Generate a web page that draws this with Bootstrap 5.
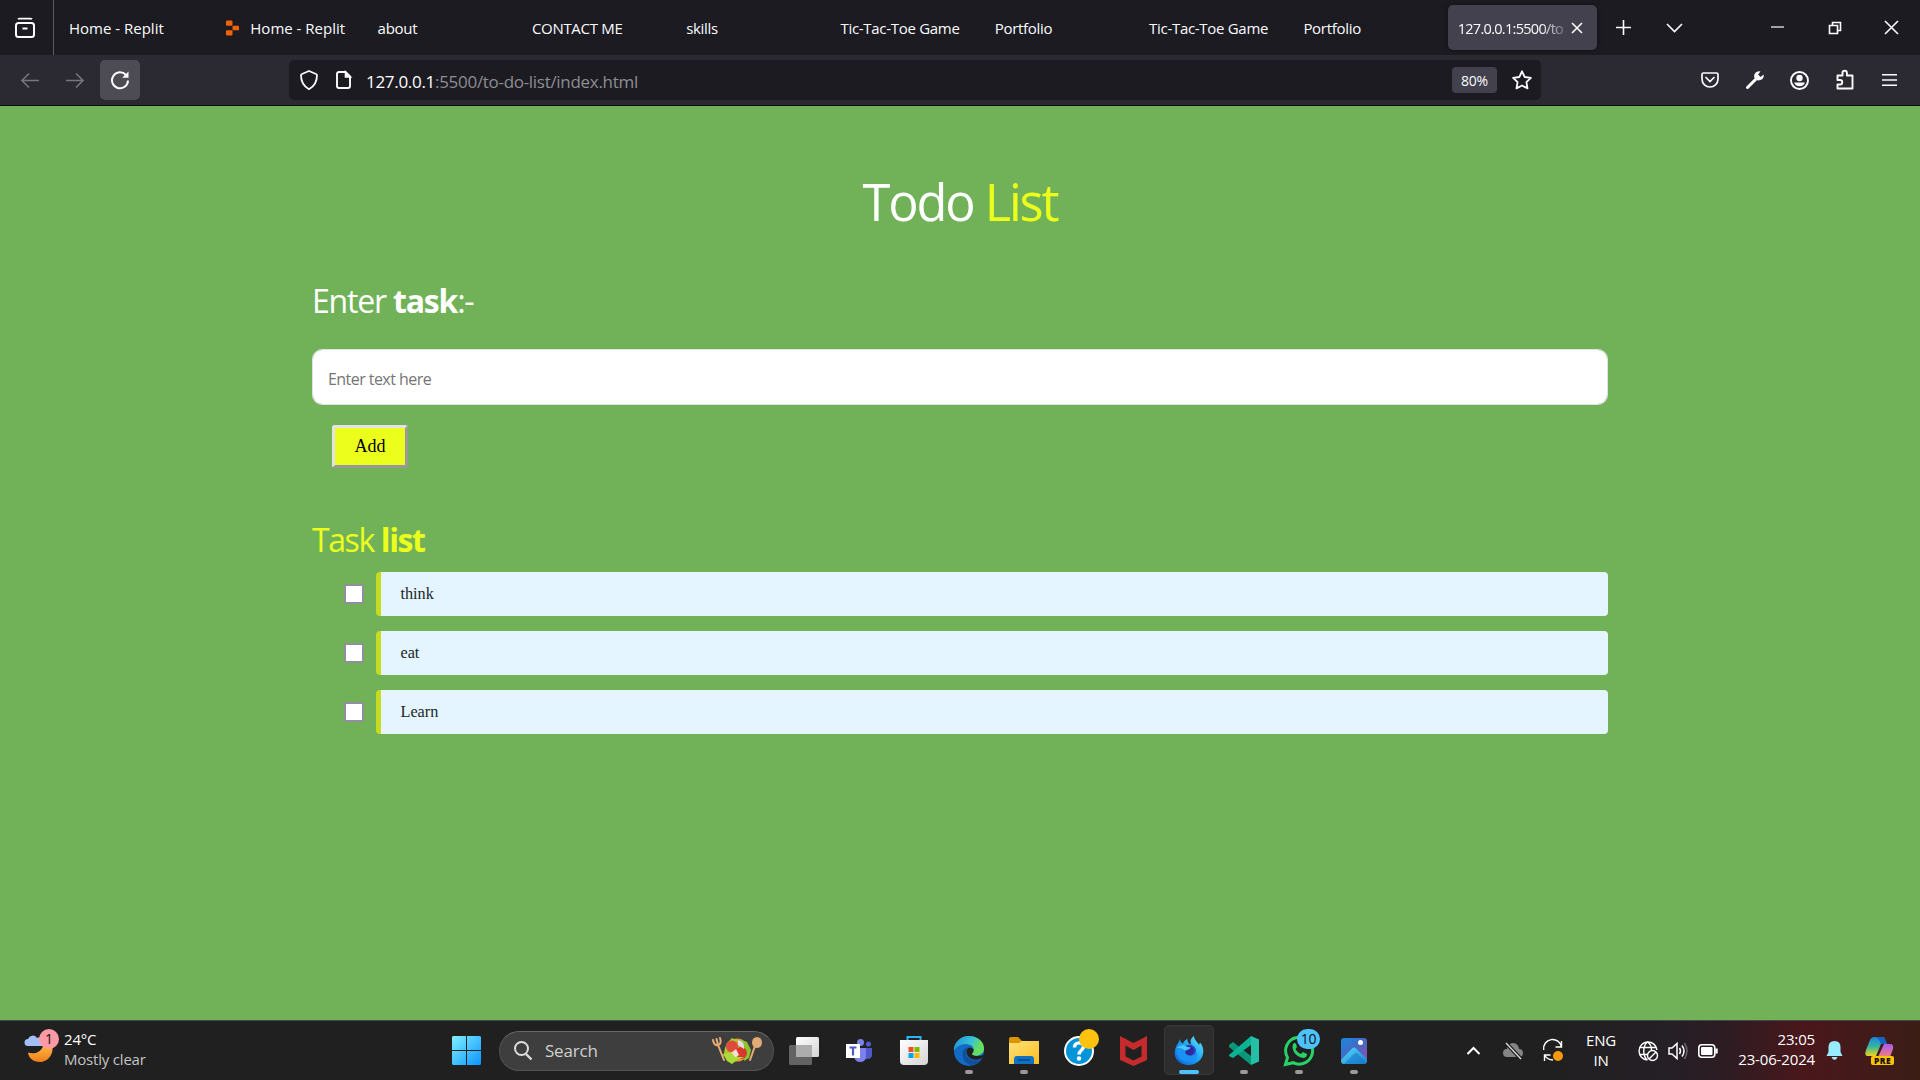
<!DOCTYPE html>
<html lang="en">
<head>
<meta charset="utf-8">
<title>Todo List</title>
<link href="https://cdn.jsdelivr.net/npm/bootstrap@5.3.0/dist/css/bootstrap.min.css" rel="stylesheet">
<style>
  body{width:1920px;height:1080px;overflow:hidden;background:#71b259;font-family:"Open Sans","Noto Sans",sans-serif;}
  svg{display:block;flex:none;fill:none;stroke:#fbfbfe;stroke-width:1.6;overflow:visible}
  .tabstrip{height:55px;background:#1c1b22;color:#fbfbfe;font-size:15px;letter-spacing:-.3px}
  .viewcell{width:54px;border-right:1px solid #5b5a60;padding-left:15px}
  .tabitem{width:154.3px;padding:2px 12px 0;white-space:nowrap}
  .tab-wide{letter-spacing:0}
  .tabs-wrap{padding-left:3px}
  .tab-active{width:149px;height:45px;background:#42414d;border-radius:5px;margin-left:2px;padding-left:10px;box-shadow:0 0 4px #0008}
  .tab-title{width:112px;white-space:nowrap;font-size:14.5px;letter-spacing:-.7px;padding-top:2px;-webkit-mask-image:linear-gradient(90deg,#000 74%,#0002 98%)}
  .cell{display:flex;align-items:center;justify-content:center;flex:none}
  .toolbar{height:51px;background:#2b2a33;border-bottom:1px solid #0c0c0d;padding-left:7px}
  .navcell{width:45px;height:40px}
  .reload{width:40px;height:40px;background:#4d4c55;border-radius:5px;margin-left:3px}
  .urlbar{width:1252px;height:40px;background:#1c1b22;border-radius:5px;margin-left:149px;padding:0 9px 0 11px;font-size:17px;color:#8e8d93}
  .urltext{margin-left:15px;padding-top:3px;letter-spacing:-.3px}
  .zoomtag{width:45px;height:26px;background:#42414d;border-radius:4px;font-size:14px;color:#fbfbfe;letter-spacing:-.2px}
  .page{height:914px;padding:0 312px}
  .ttl{font-size:50.5px;line-height:70px;padding-top:61px;letter-spacing:-2.1px;color:#fff}
  .sub{font-size:32px;line-height:44px;letter-spacing:-1.2px;color:#fff}
  .sub-list{letter-spacing:-1.4px}
  .yel{color:#ecff1c}
  .taskinput,.taskinput:focus{height:56px;border:1px solid #dee2e6;border-radius:10px;padding:3px 15px 0;font-size:16px;letter-spacing:-.55px}
  .taskinput::placeholder{color:#757575}
  .addbtn{width:76px;height:43px;margin:20px 0 0 20px;background:#ecff1c;border:3px solid;border-color:#e3e3e3 #999 #999 #e3e3e3;border-radius:3px;font:18px "Liberation Serif",serif;color:#000}
  .taskrow{height:44px;margin-bottom:15px;padding-left:32px}
  .chk{appearance:none;width:20px;height:20px;border:2px solid #8f8f9d;border-radius:2px;background:#fff;margin:0 12px 0 0;flex:none}
  .tasktext{height:44px;line-height:44px;background:#e4f5ff;border-left:5px solid #c5dc20;border-radius:4px;padding-left:19.5px;font-family:"Liberation Serif",serif;font-size:16.2px;color:#212529}
  .taskbar{height:60px;background:linear-gradient(90deg,#202020 0 80%,#251f26 87%,#2d1c22 90%,#4a171b 94%,#45191a 96%,#3b1d16 100%);border-top:1px solid #474747;color:#fff;font-size:15px;line-height:20px;letter-spacing:-.2px}
  .taskbar svg{stroke:none}
  .weather{width:439px;padding-left:24px}
  .raised{padding-bottom:4px}
  .searchbox{width:275px;height:40px;border-radius:20px;background:#3e3e3e;border:1px solid #525252;border-top-color:#686868;margin:0 2px 0 5px;padding:0 11px 0 14px;font-size:17px;color:#d0d0d0}
  .app{width:55px;height:59px;position:relative}
  .app::after{content:"";position:absolute;left:23.5px;bottom:6px;width:8px;height:4px;border-radius:2px;background:transparent}
  .app.run::after{background:#9a9a9a}
  .app.cur::after{background:#4cc2ff;left:17.5px;width:20px}
  .app.cur::before{content:"";position:absolute;left:2.5px;top:4px;width:50px;height:50px;border-radius:5px;background:#2d2d2d;border:1px solid #383838}
  .app svg{position:relative}
  .tick{position:absolute;border-radius:50%;text-align:center;color:#111;z-index:1}
</style>
<script src="https://cdn.jsdelivr.net/npm/bootstrap@5.3.0/dist/js/bootstrap.bundle.min.js"></script>
</head>
<body class="d-flex flex-column">
<header>
  <div class="tabstrip d-flex align-items-center">
    <div class="viewcell h-100 d-flex align-items-center"><svg width="20" height="20" viewBox="0 0 20 20" stroke-width="2"><path d="M3 1.2Q3.500.6 5 .6h10q1.500 0 2 .6" stroke-width="1.800"/><rect x="1" y="5" width="18" height="14" rx="2.500" stroke-width="2"/><path d="M7.500 10.500h5" stroke-width="2"/></svg></div>
    <nav class="tabs-wrap d-flex align-items-center">
      <div class="tabitem tab-wide">Home - Replit</div>
      <div class="tabitem tab-wide d-flex align-items-center"><svg width="13" height="16" viewBox="0 0 14 16" style="margin:-2px 11px 0 3px;stroke:none;fill:#f26207"><rect width="7" height="5.500" rx="1"/><rect x="7" y="5.500" width="7" height="5" rx="1"/><rect y="10.500" width="7" height="5.500" rx="1"/></svg>Home - Replit</div>
      <div class="tabitem">about</div>
      <div class="tabitem">CONTACT ME</div>
      <div class="tabitem">skills</div>
      <div class="tabitem">Tic-Tac-Toe Game</div>
      <div class="tabitem">Portfolio</div>
      <div class="tabitem">Tic-Tac-Toe Game</div>
      <div class="tabitem">Portfolio</div>
      <div class="tab-active d-flex align-items-center"><span class="tab-title">127.0.0.1:5500/to</span><svg width="10" height="10" viewBox="0 0 10 10" style="margin-left:2px" stroke-width="1.300"><path d="M0 0 10 10M10 0 0 10"/></svg></div>
    </nav>
    <div class="cell" style="width:53px"><svg width="15" height="15" viewBox="0 0 15 15"><path d="M7.500 0v15M0 7.500h15"/></svg></div>
    <div class="cell" style="width:49px"><svg width="15" height="8" viewBox="0 0 15 8"><path d="M0 0 7.500 7.500 15 0"/></svg></div>
    <div class="d-flex ms-auto align-items-center">
      <div class="cell" style="width:57px"><svg width="13" height="2" viewBox="0 0 13 2"><path d="M0 0h13" stroke-width="1.200"/></svg></div>
      <div class="cell" style="width:57px"><svg width="12" height="12" viewBox="0 0 12 12" stroke-width="1.200"><path d="M.5 3.500h8v8h-8zM3.500 3.500v-3h8v8h-3"/></svg></div>
      <div class="cell" style="width:57px"><svg width="13" height="13" viewBox="0 0 13 13" stroke-width="1.200"><path d="M0 0 13 13M13 0 0 13"/></svg></div>
    </div>
  </div>
  <div class="toolbar d-flex align-items-center">
    <div class="navcell cell"><svg width="18" height="15" viewBox="0 0 18 15" style="stroke:#77767d"><path d="M18 7.500H1M8 .5 1 7.500l7 7"/></svg></div>
    <div class="navcell cell"><svg width="18" height="15" viewBox="0 0 18 15" style="stroke:#77767d"><path d="M0 7.500h17M10 .5l7 7-7 7"/></svg></div>
    <div class="reload cell"><svg width="18" height="18" viewBox="0 0 18 18"><path d="M15 4A8 8 0 1 0 17 9.500" stroke-width="2"/><path d="M17.500.5v6.300h-6.300z" fill="#fbfbfe" stroke="none"/></svg></div>
    <div class="urlbar d-flex align-items-center">
      <svg width="18" height="20" viewBox="0 0 18 20"><path d="M9 1 16 4q1 .3 1 1.300C17 12 15 16 9 19.200 3 16 1 12 1 5.300 1 4.300 2 4 2 4z" stroke-width="1.800" stroke-linejoin="round"/></svg>
      <svg width="15" height="18" viewBox="0 0 15 18" style="margin-left:18px"><path d="M9.500 1H3Q1 1 1 3v12q0 2 2 2h9q2 0 2-2V5.500z" stroke-width="1.900"/><path d="M9.500 1v5h5z" fill="#fbfbfe"/></svg>
      <div class="urltext"><span class="text-white">127.0.0.1</span>:5500/to-do-list/index.html</div>
      <div class="zoomtag cell ms-auto">80%</div>
      <svg width="20" height="20" viewBox="0 0 20 20" style="margin-left:15px"><path d="m10 1.300 2.700 5.700 6.200.9-4.500 4.300 1.100 6.200L10 15.500l-5.500 2.900 1.100-6.200L1.100 7.900l6.200-.9z" stroke-width="1.800" stroke-linejoin="round"/></svg>
    </div>
    <div class="d-flex ms-auto align-items-center" style="padding-right:8px">
      <div class="cell" style="width:45px"><svg width="18" height="16" viewBox="0 0 18 16"><path d="M2.500 1h13q1.500 0 1.500 1.500V7c0 5-4 8-8 8S1 12 1 7V2.500Q1 1 2.500 1zM5 5.500l4 4 4-4"  stroke-width="1.700" stroke-linecap="round"/></svg></div>
      <div class="cell" style="width:45px"><svg width="18" height="18" viewBox="0 0 18 18"><path d="m1.500 16.500 9-9" stroke-width="3" stroke-linecap="round"/><path d="M14.500.4A5 5 0 0 0 8.300 6.800 5 5 0 0 0 17.600 3.500l-3 2.400-2.500-2.400z" fill="#fbfbfe" stroke="none"/></svg></div>
      <div class="cell" style="width:45px"><svg width="19" height="19" viewBox="0 0 19 19"><circle cx="9.500" cy="9.500" r="8.500" stroke-width="1.900"/><circle cx="9.500" cy="7" r="3.200" fill="#fbfbfe" stroke="none"/><path d="M4.200 11.500h10.600c-.6 2.600-2.500 3.800-5.300 3.800s-4.700-1.200-5.300-3.800z" fill="#fbfbfe" stroke="none"/></svg></div>
      <div class="cell" style="width:45px"><svg width="18" height="20" viewBox="0 0 18 20"><path d="M1.500 7V5.500H6.500V3a2.200 2.200 0 0 1 4.400 0v2.500H16.500V18.500h-15v-4H4a2.200 2.200 0 0 0 0-4.500H1.500z" stroke-width="1.900" stroke-linejoin="round"/></svg></div>
      <div class="cell" style="width:45px"><svg width="15" height="12" viewBox="0 0 15 12"><path d="M0 .7h15M0 6h15M0 11.300h15" stroke-width="1.500"/></svg></div>
    </div>
  </div>
</header>

<main class="page">
  <h1 class="ttl text-center fw-normal mb-0">Todo <span class="yel">List</span></h1>
  <label class="sub d-block" for="task" style="margin-top:42px">Enter <b>task</b>:-</label>
  <input id="task" class="form-control taskinput" placeholder="Enter text here" style="margin-top:26px">
  <button class="addbtn d-block">Add</button>
  <h2 class="sub sub-list yel fw-normal" style="margin:50px 0 10px">Task <b>list</b></h2>
  <div class="taskrow d-flex align-items-center"><input type="checkbox" class="chk"><div class="tasktext flex-grow-1">think</div></div>
  <div class="taskrow d-flex align-items-center"><input type="checkbox" class="chk"><div class="tasktext flex-grow-1">eat</div></div>
  <div class="taskrow d-flex align-items-center"><input type="checkbox" class="chk"><div class="tasktext flex-grow-1">Learn</div></div>
</main>

<footer class="taskbar d-flex align-items-center">
  <svg width="0" height="0" class="position-absolute"><defs>
    <linearGradient id="gw" x1="0" y1="0" x2="1" y2="1"><stop stop-color="#80f0ff"/><stop offset="1" stop-color="#0a94ff"/></linearGradient>
    <linearGradient id="gm" x1="0" y1="0" x2="0" y2="1"><stop stop-color="#ffc04a"/><stop offset="1" stop-color="#ef7d1b"/></linearGradient>
    <linearGradient id="ge" x1="0" y1="0" x2="1" y2=".3"><stop stop-color="#1b8fd6"/><stop offset=".6" stop-color="#38c1d8"/><stop offset="1" stop-color="#6de34f"/></linearGradient>
    <linearGradient id="gf" x1="0" y1="0" x2="1" y2="1"><stop stop-color="#ffe27a"/><stop offset="1" stop-color="#fdbd20"/></linearGradient>
    <linearGradient id="gx" x1="1" y1="0" x2="0" y2="1"><stop stop-color="#63f0f5"/><stop offset=".5" stop-color="#1ba1f5"/><stop offset="1" stop-color="#0a5ce0"/></linearGradient>
    <linearGradient id="gp" x1="0" y1="0" x2="1" y2="1"><stop stop-color="#168ae0"/><stop offset=".5" stop-color="#4a66c0"/><stop offset="1" stop-color="#9650b0"/></linearGradient>
    <linearGradient id="gh" x1="0" y1="0" x2="1" y2="1"><stop stop-color="#5ad8fb"/><stop offset="1" stop-color="#1685d1"/></linearGradient>
    <linearGradient id="gc" x1="0" y1="0" x2="0" y2="1"><stop stop-color="#1787e0"/><stop offset=".5" stop-color="#36b5a0"/><stop offset="1" stop-color="#eed51c"/></linearGradient>
    <linearGradient id="gd" x1="0" y1="0" x2="0" y2="1"><stop stop-color="#a958f0"/><stop offset="1" stop-color="#f5807a"/></linearGradient>
    <linearGradient id="gt" x1="0" y1="0" x2="1" y2="1"><stop stop-color="#fff"/><stop offset="1" stop-color="#d5d5d5"/></linearGradient>
  </defs></svg>
  <div class="weather d-flex align-items-center raised">
    <div class="position-relative"><svg width="29" height="28" viewBox="0 0 29 28"><path d="M4 17.500c7 2.500 15-1 15.500-9L28 8c3 12-5 19-12 19S4.500 23 4 17.500z" fill="url(#gm)"/><path d="M4 11a3.500 3.500 0 0 1 0-7 5 5 0 0 1 9-1 4 4 0 0 1 5 8z" fill="#a3bff5"/></svg><span class="tick" style="left:15px;top:-6px;width:20px;height:20px;background:#ff99a4;font-size:14px">1</span></div>
    <div style="margin-left:11px"><div>24°C</div><div style="color:#c3c3c3">Mostly clear</div></div>
  </div>
  <div class="app cell"><svg width="29" height="29" viewBox="0 0 29 29"><path d="M1 0h13v14H0V1zM15 0h13l1 1v13H15zM0 15h14v14H1l-1-1zM15 15h14v13l-1 1H15z" fill="url(#gw)"/></svg></div>
  <div class="searchbox d-flex align-items-center">
    <svg width="18" height="19" viewBox="0 0 18 19"><circle cx="7.500" cy="7.500" r="6.500" stroke="#ddd" stroke-width="2"/><path d="m12 13 5.500 5.500" stroke="#ddd" stroke-width="2.400"/></svg>
    <span style="margin-left:13px">Search</span>
    <svg class="ms-auto" width="50" height="27" viewBox="0 0 50 27"><g stroke="#e6ad75" stroke-width="2" stroke-linecap="round"><path d="M1 3q1 6 5 5 4-1 2-7M4.500 2l1.500 6 6 15M43 9l-5 14"/></g><ellipse cx="45" cy="5.500" rx="5" ry="5.500" fill="#e2aa74"/><circle cx="25" cy="13" r="11.500" fill="#e99a3c"/><path d="m15 6 5-5 6 3-4 4-6 5-5 8 2-10z" fill="#9ed32f"/><path d="m27 2 8 3 4 8-2 8-5 3 1-8-6-6z" fill="#8cc52b"/><circle cx="20" cy="9.500" r="6" fill="#e04a3a"/><circle cx="29" cy="16" r="6" fill="#d9362c"/><path d="M26 3q7 1 6 9l-6-4z" fill="#e8d9e8"/><path d="m19 16 5-4 3 6-5 4z" fill="#f5ded3"/><path d="m11 17 8-2 4 5 9 0-7 3-5 4-5-3z" fill="#a9dc36"/></svg>
  </div>
  <div class="app cell"><svg width="30" height="28" viewBox="0 0 30 28"><rect x="7" width="23" height="20" rx="1.500" fill="url(#gt)"/><rect y="8" width="23" height="20" rx="1.500" fill="#707070" opacity=".85"/><rect x="7" y="8" width="16" height="12" fill="#adadad"/></svg></div>
  <div class="app cell"><svg width="26" height="24" viewBox="0 0 26 24"><circle cx="14.500" cy="3.500" r="3.500" fill="#7b83eb"/><circle cx="22.500" cy="5" r="2.600" fill="#5059c9"/><path d="M17 9h9v7q0 4-5 4h-4z" fill="#5059c9"/><path d="M8 9h12v8q0 6-6 6-5 0-6-6z" fill="#7b83eb"/><rect y="5" width="14" height="14" fill="#fff"/><path d="M3.500 8.500h7M7 8.500v8" stroke="#5059c9" stroke-width="2.200"/></svg></div>
  <div class="app cell"><svg width="28" height="29" viewBox="0 0 28 29"><path d="M7.500 5V1h13v4" stroke="#29b6f6" stroke-width="2"/><path d="M0 4h28v21q0 4-4 4H4q-4 0-4-4z" fill="url(#gt)"/><path d="M8.500 11h5v5h-5z" fill="#f25022"/><path d="M14.500 11h5v5h-5z" fill="#7fba00"/><path d="M8.500 17h5v5h-5z" fill="#00a4ef"/><path d="M14.500 17h5v5h-5z" fill="#ffb900"/></svg></div>
  <div class="app run cell"><svg width="30" height="30" viewBox="0 0 30 30"><circle cx="15" cy="15" r="15" fill="#126bc4"/><path d="M0 15C-1 8 5 0 15 0c9 0 15 6 15 12 0 8-10 9-12 6 5-6-1-10-6-10C5 8 1 12 0 15z" fill="url(#ge)"/><path d="M13 11c-5 1-8 14 4 18 5 0 9-3 11-6-8 4-20 0-15-12z" fill="#114f99"/><path d="M15 11.500c-5 2-2.500 11 5 12 4 .5 7-.5 8.500-1.500l2-4c-3 2.500-10 3-12.500 0 4-4 0-7-3-6.500z" fill="#202020"/><path d="M30 12c0 8-10 9-12 6 3-3 2-6 1-7z" fill="#62dc65"/></svg></div>
  <div class="app run cell"><svg width="30" height="27" viewBox="0 0 30 27"><path d="M0 2q0-2 2-2h7l4 4v6H0z" fill="#dc9500"/><path d="M0 6h10l3-2h17v23H0z" fill="url(#gf)"/><path d="M5 27v-5q0-3 3-3h14q3 0 3 3v5z" fill="#1172c4"/><path d="M9 23h12" stroke="#084a83" stroke-width="1.500"/></svg></div>
  <div class="app cell"><svg width="30" height="30" viewBox="0 0 30 30"><circle cx="15" cy="15" r="14" fill="#0494da" stroke="#fff" stroke-width="2"/><path d="M10.500 11.500c0-6 9-6 9-1 0 4-4.500 3.500-4.500 8" stroke="#fff" stroke-width="3.500"/><circle cx="15" cy="22.500" r="2.200" fill="#fff"/></svg><span class="tick" style="left:28px;top:8px;width:20px;height:20px;background:#ffc20e"></span></div>
  <div class="app cell"><svg width="27" height="30" viewBox="0 0 27 30"><path d="m0 0 13.500 7L27 0v24l-13.500 6L0 24zm5.500 9.500V20.500l8 4 8-4V9.500l-8 4.500z" fill="#c52b2d" fill-rule="evenodd"/></svg></div>
  <div class="app run cur cell"><svg width="28" height="29" viewBox="0 0 28 29"><path d="M5 3C5 5.500 6.500 7 8 7.500 9.500 4.500 11 3.500 12.500 3 12 6 13.500 8 16.500 8.500 14.500 5 16 2 19 0c0 4 4 6 5 9l1-2.500c4 4.500 4 10.500 2 14.500-4 8-13 9-19 7C0 25-2 17 1 11 2 8 4 7 5 3z" fill="url(#gx)"/><circle cx="14.500" cy="15" r="6.500" fill="#2d46c4"/><circle cx="14.500" cy="14.500" r="4.500" fill="#33259a"/><path d="M1 13C4 8.500 9 8 12 11l3.500.5c-.5 3-4.500 2-5.500 4.500 1 5 9.500 5.500 11-1C24 21 19 26 13 26 6 26 1 20 1 13z" fill="#1a92f4"/><path d="M2 12c3-3.500 7-3.500 10-1l3.500.5c-1 2-4 1.500-5.500 3C7 12 4 12 2 12z" fill="#48c7fa"/></svg></div>
  <div class="app run cell"><svg width="30" height="29" viewBox="0 0 30 29"><path d="M0 9 4 6 22 20v9L0 11z" fill="#089777"/><path d="M0 19 22 0v9L4 22l-4-2z" fill="#0bb395"/><path d="m22 0 8 3.500v22L22 29z" fill="#24bfa5"/></svg></div>
  <div class="app run cell"><svg width="30" height="30" viewBox="0 0 30 30"><path d="m1.500 28.500 2-7A13.500 13.500 0 1 1 9 26.700z" stroke="#25d366" stroke-width="3"/><path d="M9 8q2-2 3 0l1 3-1.500 2q2 4 5.500 5l2-2 4 2q0 4-4 4C12 21 7 14 9 8z" fill="#25d366"/></svg><span class="tick" style="left:26px;top:8px;width:23px;height:20px;border-radius:10px;background:#4cc2ff;font-size:14px">10</span></div>
  <div class="app run cell"><svg width="26" height="26" viewBox="0 0 26 26"><rect width="26" height="26" rx="3" fill="url(#gp)"/><path d="M0 22 11 10.500q2-2 4 0L26 21v2q-1 3-3 3H3q-3 0-3-4z" fill="url(#gh)"/><path d="M3 26 13 16q2-2 4 0l8 8.500q-1 1.500-2 1.500z" fill="#1477c8" opacity=".55"/><circle cx="19.500" cy="4.500" r="2.500" fill="#fff"/></svg></div>

  <div class="d-flex align-items-center ms-auto" style="padding-right:15px">
    <div class="cell" style="width:40px"><svg width="13" height="8" viewBox="0 0 13 8"><path d="m.5 7 6-6 6 6" stroke="#fff" stroke-width="2"/></svg></div>
    <div class="cell" style="width:40px"><svg width="20" height="16" viewBox="0 0 20 16"><path d="M4 14a4 4 0 0 1 0-8 6 6 0 0 1 12 0 4 4 0 0 1 0 8z" fill="#858585"/><path d="m3 0 15 16" stroke="#202020" stroke-width="4"/><path d="m3 0 15 16" stroke="#ddd" stroke-width="1.300"/></svg></div>
    <div class="cell" style="width:40px"><svg width="20" height="20" viewBox="0 0 20 20"><g stroke="#fff" stroke-width="1.400"><path d="M.7 9A9 9 0 0 1 18.500 6M18.500 0v6h-6M1.500 20v-6h6M1.500 14q3 5 8.500 5"/></g><circle cx="15" cy="15" r="5" fill="#f7980a"/></svg></div>
    <div class="text-center" style="width:56px;padding-bottom:2px">ENG<br>IN</div>
    <div class="cell" style="width:38px"><svg width="20" height="20" viewBox="0 0 20 20"><g stroke="#fff" stroke-width="1.400"><path d="M9.500 19A9 9 0 1 1 19 9M1.500 6.500h17M1.500 13.500H9M9.500 19c-5-4-5-14 0-18 3 2 4 5 4 8"/><circle cx="14.500" cy="14.500" r="5"/><path d="m11 18 7-7"/></g></svg></div>
    <div class="cell" style="width:22px"><svg width="20" height="18" viewBox="0 0 20 18"><g stroke="#fff" stroke-width="1.500"><path d="M1 6h3l5-4.500v15L4 12H1zM11.500 6q2 3 0 6M14 3.500q4 5.500 0 11"/><path d="M16.500 1q5 8 0 16" stroke="#666"/></g></svg></div>
    <div class="cell" style="width:38px"><svg width="20" height="14" viewBox="0 0 20 14"><rect x=".8" y=".8" width="16" height="12.400" rx="3" stroke="#fff" stroke-width="1.600"/><rect x="3" y="3" width="11.500" height="8" rx="1" fill="#fff"/><path d="M18.500 4.500v5" stroke="#fff" stroke-width="2.400"/></svg></div>
    <div class="text-end raised" style="width:88px;letter-spacing:-.15px">23:05<br>23-06-2024</div>
    <div class="cell" style="width:39px"><svg width="17" height="19" viewBox="0 0 17 19"><path d="M8.500 0q6 0 6 6v5l2 4H.5l2-4V6q0-6 6-6zM5.500 16h6q-1 3-3 3t-3-3z" fill="#99ebff"/></svg></div>
    <div class="cell" style="width:51px"><svg width="29" height="28" viewBox="0 0 29 28"><path d="M10 0h9l3 7h-6l-5 12H3Q-1 19 1 13L5 3q1-3 5-3z" fill="url(#gc)"/><path d="M10 0h9l3 7h-6q-2-6-6-7z" fill="#185fc9"/><path d="M19 7h6q4 0 3 5l-3 8H13z" fill="url(#gd)"/><rect x="6" y="19" width="23" height="9" rx="2" fill="#ffc400"/><text x="17.500" y="26.500" text-anchor="middle" font-size="8.500" font-weight="800" fill="#111" letter-spacing=".4">PRE</text></svg></div>
  </div>
</footer>
</body>
</html>
